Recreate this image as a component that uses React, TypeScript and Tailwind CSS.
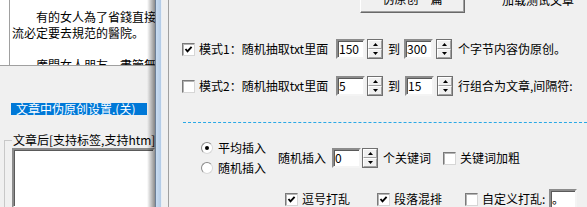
import React from "react";

const FONT = { fontFamily: '"Noto Sans CJK SC", "Noto Sans", sans-serif' };

function Check({ checked, className = "" }: { checked?: boolean; className?: string }) {
  return (
    <span className={"relative block w-[13px] h-[13px] shrink-0 bg-white border border-t-[#7a7a7a] border-l-[#7a7a7a] border-r-[#d6d6d6] border-b-[#d6d6d6] shadow-[inset_1px_1px_0_#b4b4b4] " + className}>
      {checked && (
        <svg className="absolute left-[1px] top-[1px]" width="9" height="9" viewBox="0 0 9 9">
          <path d="M1.5 4 L3.5 6.3 L7.6 1.8" stroke="#000" strokeWidth="1.9" fill="none" />
        </svg>
      )}
    </span>
  );
}

function Radio({ checked }: { checked?: boolean }) {
  return (
    <span className="w-[12px] h-[12px] shrink-0 rounded-full bg-white border border-t-[#8a8a8a] border-l-[#8a8a8a] border-r-[#d8d8d8] border-b-[#d8d8d8] flex items-center justify-center">
      {checked && <span className="block w-[4px] h-[4px] rounded-full bg-black" />}
    </span>
  );
}

function Input({ value, w = 29, h = 20, className = "" }: { value: string; w?: number; h?: number; className?: string }) {
  return (
    <span
      className={"shrink-0 bg-white border-2 border-t-[#8c8c8c] border-l-[#8c8c8c] border-r-[#f4f4f4] border-b-[#f4f4f4] shadow-[inset_1px_1px_0_#5a5a5a] flex items-center pl-[1px] text-[12px] leading-none " + className}
      style={{ width: w, height: h }}
    >
      {value}
    </span>
  );
}

function Arrow({ up }: { up?: boolean }) {
  return (
    <span className="flex-1 bg-[#f0f0f0] border border-t-white border-l-white border-r-[#a0a0a0] border-b-[#a0a0a0] flex items-center justify-center">
      <svg width="5" height="3" viewBox="0 0 5 3">
        {up ? <path d="M0 3 L2.5 0 L5 3 Z" fill="#000" /> : <path d="M0 0 L5 0 L2.5 3 Z" fill="#000" />}
      </svg>
    </span>
  );
}

function Spin({ className = "" }: { className?: string }) {
  return (
    <span className={"w-[16px] h-[20px] shrink-0 border border-[#707070] flex flex-col " + className}>
      <Arrow up />
      <Arrow />
    </span>
  );
}

export default function App() {
  return (
    <div className="w-[587px] h-[207px] overflow-hidden flex bg-[#f0f0f0] text-black text-[12px] leading-none" style={FONT}>
      {/* left window */}
      <div className="relative w-[155px] shrink-0 h-full flex flex-col">
        <div className="h-[66px] bg-white border-b border-[#a0a0a0] flex">
          <div className="w-[9px] shrink-0 bg-white" />
          <div className="flex-1 border-l border-[#a0a0a0] pl-[2px] pt-[9px] leading-[16px] overflow-hidden whitespace-nowrap text-[12px]">
            <div>　　有的女人為了省錢直接</div>
            <div>流必定要去規范的醫院。</div>
            <div>&nbsp;</div>
            <div>　　廣開女人朋友，盡管無</div>
          </div>
        </div>
        <div className="ml-[11px] mt-[37px] w-[136px] h-[15px] bg-[#0078d7] text-white flex items-center pl-[5px] whitespace-nowrap">
          文章中伪原创设置.(关)
        </div>
        <div className="mt-[25px] ml-[4px] flex-1 relative border-l border-[#c8c8c8]">
          <div className="absolute left-[-1px] top-[0px] w-[8px] h-[1px] bg-[#c8c8c8]" />
          <div className="absolute left-[8px] top-[-6px] whitespace-nowrap bg-[#f0f0f0]">文章后[支持标签,支持htm]</div>
          <div className="mt-[8px] ml-[7px] h-[60px] bg-white border-2 border-t-[#8c8c8c] border-l-[#8c8c8c] border-r-white border-b-white shadow-[inset_1px_1px_0_#5a5a5a]" />
        </div>
        {/* shadow of dialog */}
        <div className="absolute right-0 top-0 h-full w-[8px] bg-gradient-to-r from-transparent to-[rgba(0,0,0,0.45)]" />
      </div>

      {/* dialog frame */}
      <div className="w-[1px] shrink-0 bg-[#6c7f96]" />
      <div className="w-[5px] shrink-0 bg-gradient-to-r from-[#c9dcf0] to-[#b3cbe6]" />
      <div className="w-[1px] shrink-0 bg-[#e8eef5]" />
      <div className="w-[6px] shrink-0 bg-[#f0f0f0]" />
      <div className="w-[1px] shrink-0 bg-[#a0a0a0]" />

      {/* dialog content */}
      <div className="flex-1 flex flex-col">
        <div className="h-[13px] flex items-end whitespace-nowrap">
          <span className="ml-[191px] w-[105px] h-[28px] shrink-0 bg-[#f0f0f0] border border-t-white border-l-white border-r-[#696969] border-b-[#696969] shadow-[inset_-1px_-1px_0_#a0a0a0] flex items-center justify-center">
            伪原创一篇
          </span>
          <span className="ml-[37px] self-start -mt-[6px]">加载测试文章</span>
        </div>

        {/* row 1 */}
        <div className="mt-[26px] h-[20px] flex items-center whitespace-nowrap">
          <Check checked className="ml-[13px]" />
          <span className="ml-[4px] w-[137px]">模式1：随机抽取txt里面</span>
          <Input value="150" />
          <Spin className="ml-[2px]" />
          <span className="ml-[5px] w-[12px]">到</span>
          <Input value="300" className="ml-[4px]" />
          <Spin className="ml-[3px]" />
          <span className="ml-[6px]">个字节内容伪原创。</span>
        </div>

        {/* row 2 */}
        <div className="mt-[17px] h-[20px] flex items-center whitespace-nowrap">
          <Check className="ml-[13px]" />
          <span className="ml-[4px] w-[137px]">模式2：随机抽取txt里面</span>
          <Input value="5" />
          <Spin className="ml-[2px]" />
          <span className="ml-[5px] w-[12px]">到</span>
          <Input value="15" className="ml-[5px]" />
          <Spin className="ml-[3px]" />
          <span className="ml-[5px]">行组合为文章,间隔符:</span>
        </div>

        {/* dashed line */}
        <div className="mt-[26px] ml-[14px] border-t border-dashed border-[#2aa9e6]" />

        {/* insert section */}
        <div className="mt-[15px] h-[40px] flex items-center whitespace-nowrap">
          <div className="ml-[32px] w-[77px] flex flex-col">
            <div className="h-[20px] flex items-center"><Radio checked /><span className="ml-[5px]">平均插入</span></div>
            <div className="h-[20px] flex items-center"><Radio /><span className="ml-[5px]">随机插入</span></div>
          </div>
          <span className="w-[54px]">随机插入</span>
          <Input value="0" />
          <Spin className="ml-[1px]" />
          <span className="ml-[5px] w-[48px]">个关键词</span>
          <Check className="ml-[12px]" />
          <span className="ml-[4px]">关键词加粗</span>
        </div>

        {/* bottom row */}
        <div className="mt-[11px] h-[20px] flex items-center whitespace-nowrap">
          <Check checked className="ml-[116px]" />
          <span className="ml-[4px] w-[75px]">逗号打乱</span>
          <Check checked />
          <span className="ml-[4px] w-[71px]">段落混排</span>
          <Check />
          <span className="ml-[4px] w-[67px]">自定义打乱:</span>
          <Input value="。" w={28} />
        </div>
      </div>
    </div>
  );
}
